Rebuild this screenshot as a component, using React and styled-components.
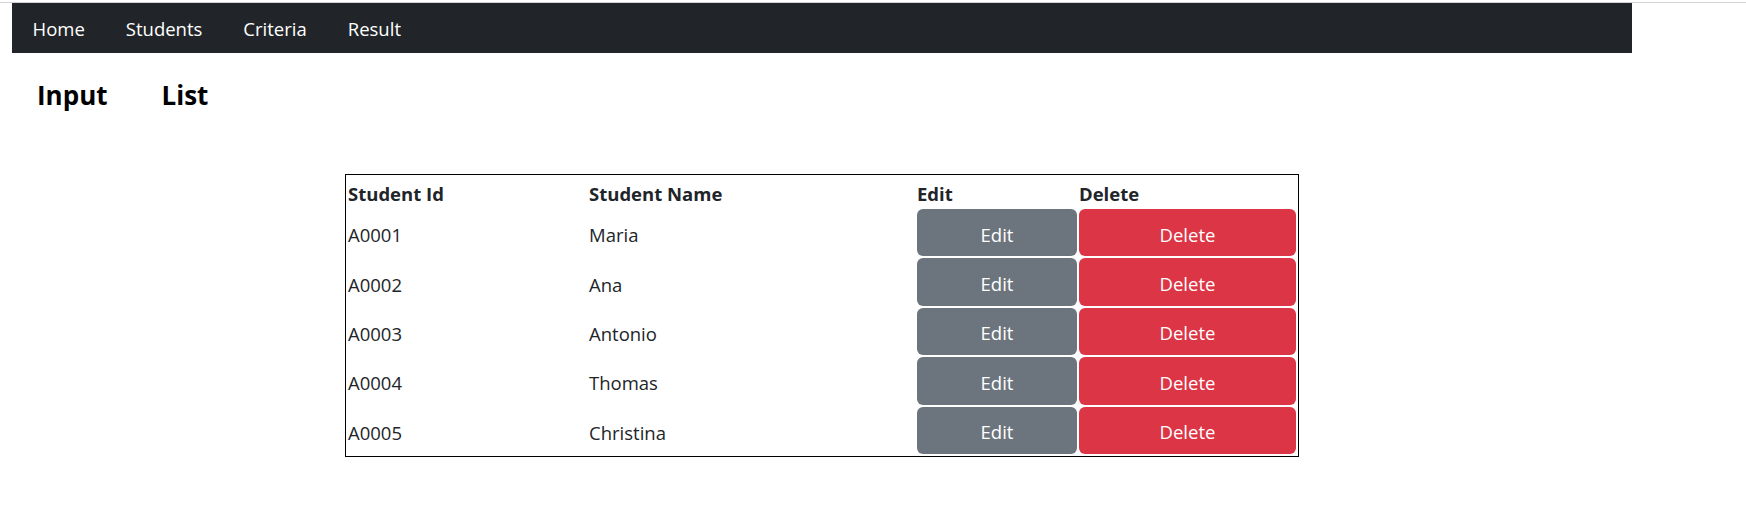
import React from 'react';
import styled, { createGlobalStyle } from 'styled-components';

const students = [
  { id: 'A0001', name: 'Maria' },
  { id: 'A0002', name: 'Ana' },
  { id: 'A0003', name: 'Antonio' },
  { id: 'A0004', name: 'Thomas' },
  { id: 'A0005', name: 'Christina' },
];

const navItems = ['Home', 'Students', 'Criteria', 'Result'];

const GlobalStyle = createGlobalStyle`
  body {
    margin: 0;
    background: #fff;
    font-family: 'Open Sans', 'Noto Sans', sans-serif;
    color: #212529;
  }
`;

const App = () => {
  return (
    <>
      <GlobalStyle />
      <TopLine />
      <Page>
        <Navbar>
          {navItems.map((item) => (
            <NavLink key={item}>{item}</NavLink>
          ))}
        </Navbar>
        <Tabs>
          <Tab>Input</Tab>
          <Tab>List</Tab>
        </Tabs>
        <Table>
          <colgroup>
            <col style={{ width: 239 }} />
            <col style={{ width: 326 }} />
            <col style={{ width: 160 }} />
            <col style={{ width: 217 }} />
          </colgroup>
          <thead>
            <tr>
              <HeadCell>Student Id</HeadCell>
              <HeadCell>Student Name</HeadCell>
              <HeadCell>Edit</HeadCell>
              <HeadCell>Delete</HeadCell>
            </tr>
          </thead>
          <tbody>
            {students.map((student) => (
              <tr key={student.id}>
                <Cell>{student.id}</Cell>
                <Cell>{student.name}</Cell>
                <ButtonCell>
                  <ActionButton variant="secondary">Edit</ActionButton>
                </ButtonCell>
                <ButtonCell>
                  <ActionButton variant="danger">Delete</ActionButton>
                </ButtonCell>
              </tr>
            ))}
          </tbody>
        </Table>
      </Page>
    </>
  );
};

export default App;

const TopLine = styled.div`
  height: 2px;
  border-bottom: 1px solid #d2d2d2;
`;

const Page = styled.div`
  width: 1620px;
  margin-left: 12px;
  padding-bottom: 60px;
`;

const Navbar = styled.nav`
  display: flex;
  align-items: center;
  height: 50px;
  background: #212529;
`;

const NavLink = styled.a`
  padding: 0 20.5px;
  font-size: 18.5px;
  line-height: 27px;
  color: #fff;
  cursor: pointer;
`;

const Tabs = styled.div`
  display: flex;
  gap: 54px;
  margin-top: 24px;
  padding-left: 25px;
`;

const Tab = styled.h3`
  margin: 0;
  font-size: 26px;
  line-height: 36px;
  font-weight: 700;
  color: #000;
`;

const Table = styled.table`
  margin: 61px auto 0;
  border: 1px solid #000;
  border-spacing: 2px;
  table-layout: fixed;
  width: 954px;
  font-size: 18.5px;
  line-height: 27px;
`;

const HeadCell = styled.th`
  height: 30px;
  padding: 4px 0 0;
  line-height: 26px;
  text-align: left;
  font-weight: 700;
  box-sizing: border-box;
`;

const Cell = styled.td`
  height: 47.4px;
  padding: 4px 0 0;
  vertical-align: middle;
  box-sizing: border-box;
`;

const ButtonCell = styled.td`
  height: 47.4px;
  padding: 0;
`;

const ActionButton = styled.button`
  display: block;
  width: 100%;
  height: 47.4px;
  padding: 3px 0 0;
  border: none;
  border-radius: 6px;
  font-family: inherit;
  font-size: 18.5px;
  line-height: 27px;
  color: #fff;
  cursor: pointer;
  background: ${({ variant }) => (variant === 'danger' ? '#dc3545' : '#6c757d')};
`;
